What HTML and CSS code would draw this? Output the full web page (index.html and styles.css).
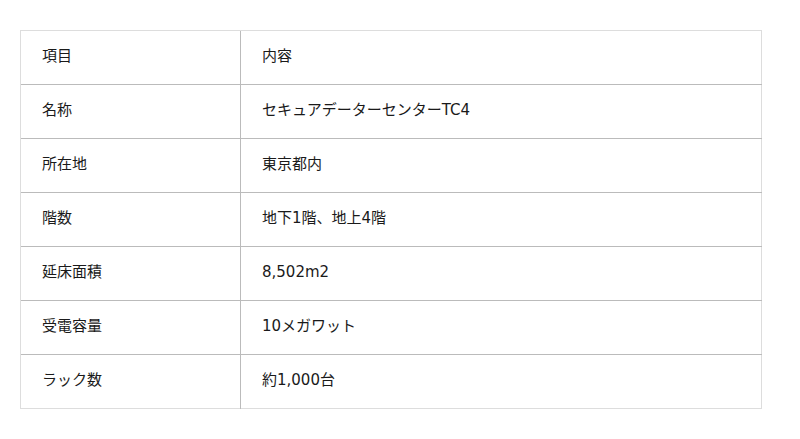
FILE: index.html
```html
<!DOCTYPE html>
<html lang="ja">
<head>
<meta charset="utf-8">
<link rel="stylesheet" href="styles.css">
</head>
<body>
<table class="spec">
  <tr><td class="label">項目</td><td class="value">内容</td></tr>
  <tr><td class="label">名称</td><td class="value">セキュアデーターセンターTC4</td></tr>
  <tr><td class="label">所在地</td><td class="value">東京都内</td></tr>
  <tr><td class="label">階数</td><td class="value">地下1階、地上4階</td></tr>
  <tr><td class="label">延床面積</td><td class="value">8,502m2</td></tr>
  <tr><td class="label">受電容量</td><td class="value">10メガワット</td></tr>
  <tr><td class="label">ラック数</td><td class="value">約1,000台</td></tr>
</table>
</body>
</html>
```
FILE: styles.css
```css
html, body {
  margin: 0;
  background: #fff;
}
body {
  padding: 30px 20px;
  font-family: "DejaVu Sans", "Noto Sans CJK JP", sans-serif;
  font-size: 15px;
  color: #1a1a1a;
}
.spec {
  border-collapse: collapse;
  width: 742px;
  border: 1px solid #ddd;
}
.spec td {
  height: 54px;
  padding: 0 21px 3px;
  box-sizing: border-box;
  border-top: 1px solid #bbb;
  border-left: 1px solid #bbb;
  vertical-align: middle;
  line-height: 20px;
}
.spec tr:first-child td {
  border-top: 1px solid #ddd;
}
.spec td.label {
  width: 220px;
  border-left: 1px solid #ddd;
}
```
